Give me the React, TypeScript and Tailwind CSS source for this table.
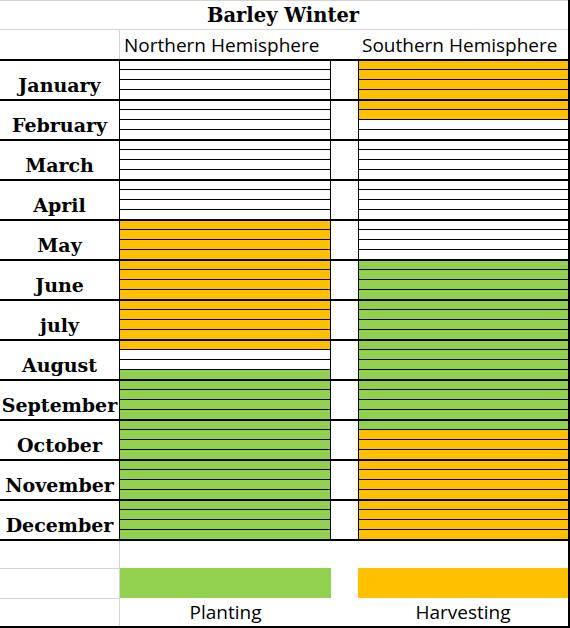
import React from 'react';

type Fill = 'w' | 'o' | 'g';

const MONTHS = [
  'January',
  'February',
  'March',
  'April',
  'May',
  'June',
  'july',
  'August',
  'September',
  'October',
  'November',
  'December',
];

// 4 sub-rows per month, top to bottom
const NORTH: Fill[] = (
  'wwww' + 'wwww' + 'wwww' + 'wwww' +
  'oooo' + 'oooo' + 'oooo' + 'owwg' +
  'gggg' + 'gggg' + 'gggg' + 'gggg'
).split('') as Fill[];

const SOUTH: Fill[] = (
  'oooo' + 'ooww' + 'wwww' + 'wwww' +
  'wwww' + 'gggg' + 'gggg' + 'gggg' +
  'gggg' + 'gooo' + 'oooo' + 'oooo'
).split('') as Fill[];

const fillClass = (f: Fill) =>
  f === 'o' ? 'bg-[#ffc000]' : f === 'g' ? 'bg-[#92d050]' : 'bg-white';

const serif = { fontFamily: '"DejaVu Serif", serif' };
const sans = { fontFamily: '"Open Sans", sans-serif' };

const Bars: React.FC<{ cells: Fill[] }> = ({ cells }) => (
  <div className="flex flex-col">
    {cells.map((c, i) => (
      <div
        key={i}
        className={`${fillClass(c)} ${i === 0 ? 'h-[8px]' : 'h-[10px] border-t border-black'}`}
      />
    ))}
  </div>
);

export default function App() {
  return (
    <div className="w-[570px] h-[628px] bg-white border-r-2 border-b-2 border-black text-black overflow-hidden">
      {/* Title */}
      <div className="h-[30px] border-t border-b border-[#d4d4d4] flex items-end justify-center pb-[4px] pr-[2px]">
        <span className="font-bold text-[19.5px] leading-none" style={serif}>
          Barley Winter
        </span>
      </div>

      {/* Hemisphere headers */}
      <div className="h-[29px] flex" style={sans}>
        <div className="w-[120px] border-r border-[#d4d4d4]" />
        <div className="w-[238px] pl-[4px] flex items-end pb-[4px] text-[19px] leading-none">
          Northern Hemisphere
        </div>
        <div className="w-[210px] pl-[4px] flex items-end pb-[4px] text-[19px] leading-none">
          Southern Hemisphere
        </div>
      </div>

      {/* Months */}
      {MONTHS.map((m, mi) => (
        <div key={m} className="h-[40px] border-t-2 border-black flex">
          <div
            className="w-[119px] flex items-end justify-center pb-[4px] font-bold text-[19px] leading-none"
            style={serif}
          >
            {m}
          </div>
          <div className="w-[212px] border-l border-r border-black">
            <Bars cells={NORTH.slice(mi * 4, mi * 4 + 4)} />
          </div>
          <div className="w-[27px]" />
          <div className="w-[210px] border-l border-black">
            <Bars cells={SOUTH.slice(mi * 4, mi * 4 + 4)} />
          </div>
        </div>
      ))}

      {/* Blank row */}
      <div className="h-[29px] border-t-2 border-black flex">
        <div className="w-[120px] border-r border-[#d4d4d4]" />
      </div>

      {/* Legend colours */}
      <div className="h-[30px] flex">
        <div className="w-[120px] border-r border-t border-[#d4d4d4]" />
        <div className="w-[211px] bg-[#92d050]" />
        <div className="w-[27px]" />
        <div className="w-[210px] bg-[#ffc000]" />
      </div>

      {/* Legend labels */}
      <div className="h-[28px] flex text-[19px] leading-none" style={sans}>
        <div className="w-[120px] border-r border-t border-[#d4d4d4]" />
        <div className="w-[211px] flex items-end justify-center pb-[4px]">Planting</div>
        <div className="w-[27px]" />
        <div className="w-[210px] flex items-end justify-center pb-[4px]">Harvesting</div>
      </div>
    </div>
  );
}
